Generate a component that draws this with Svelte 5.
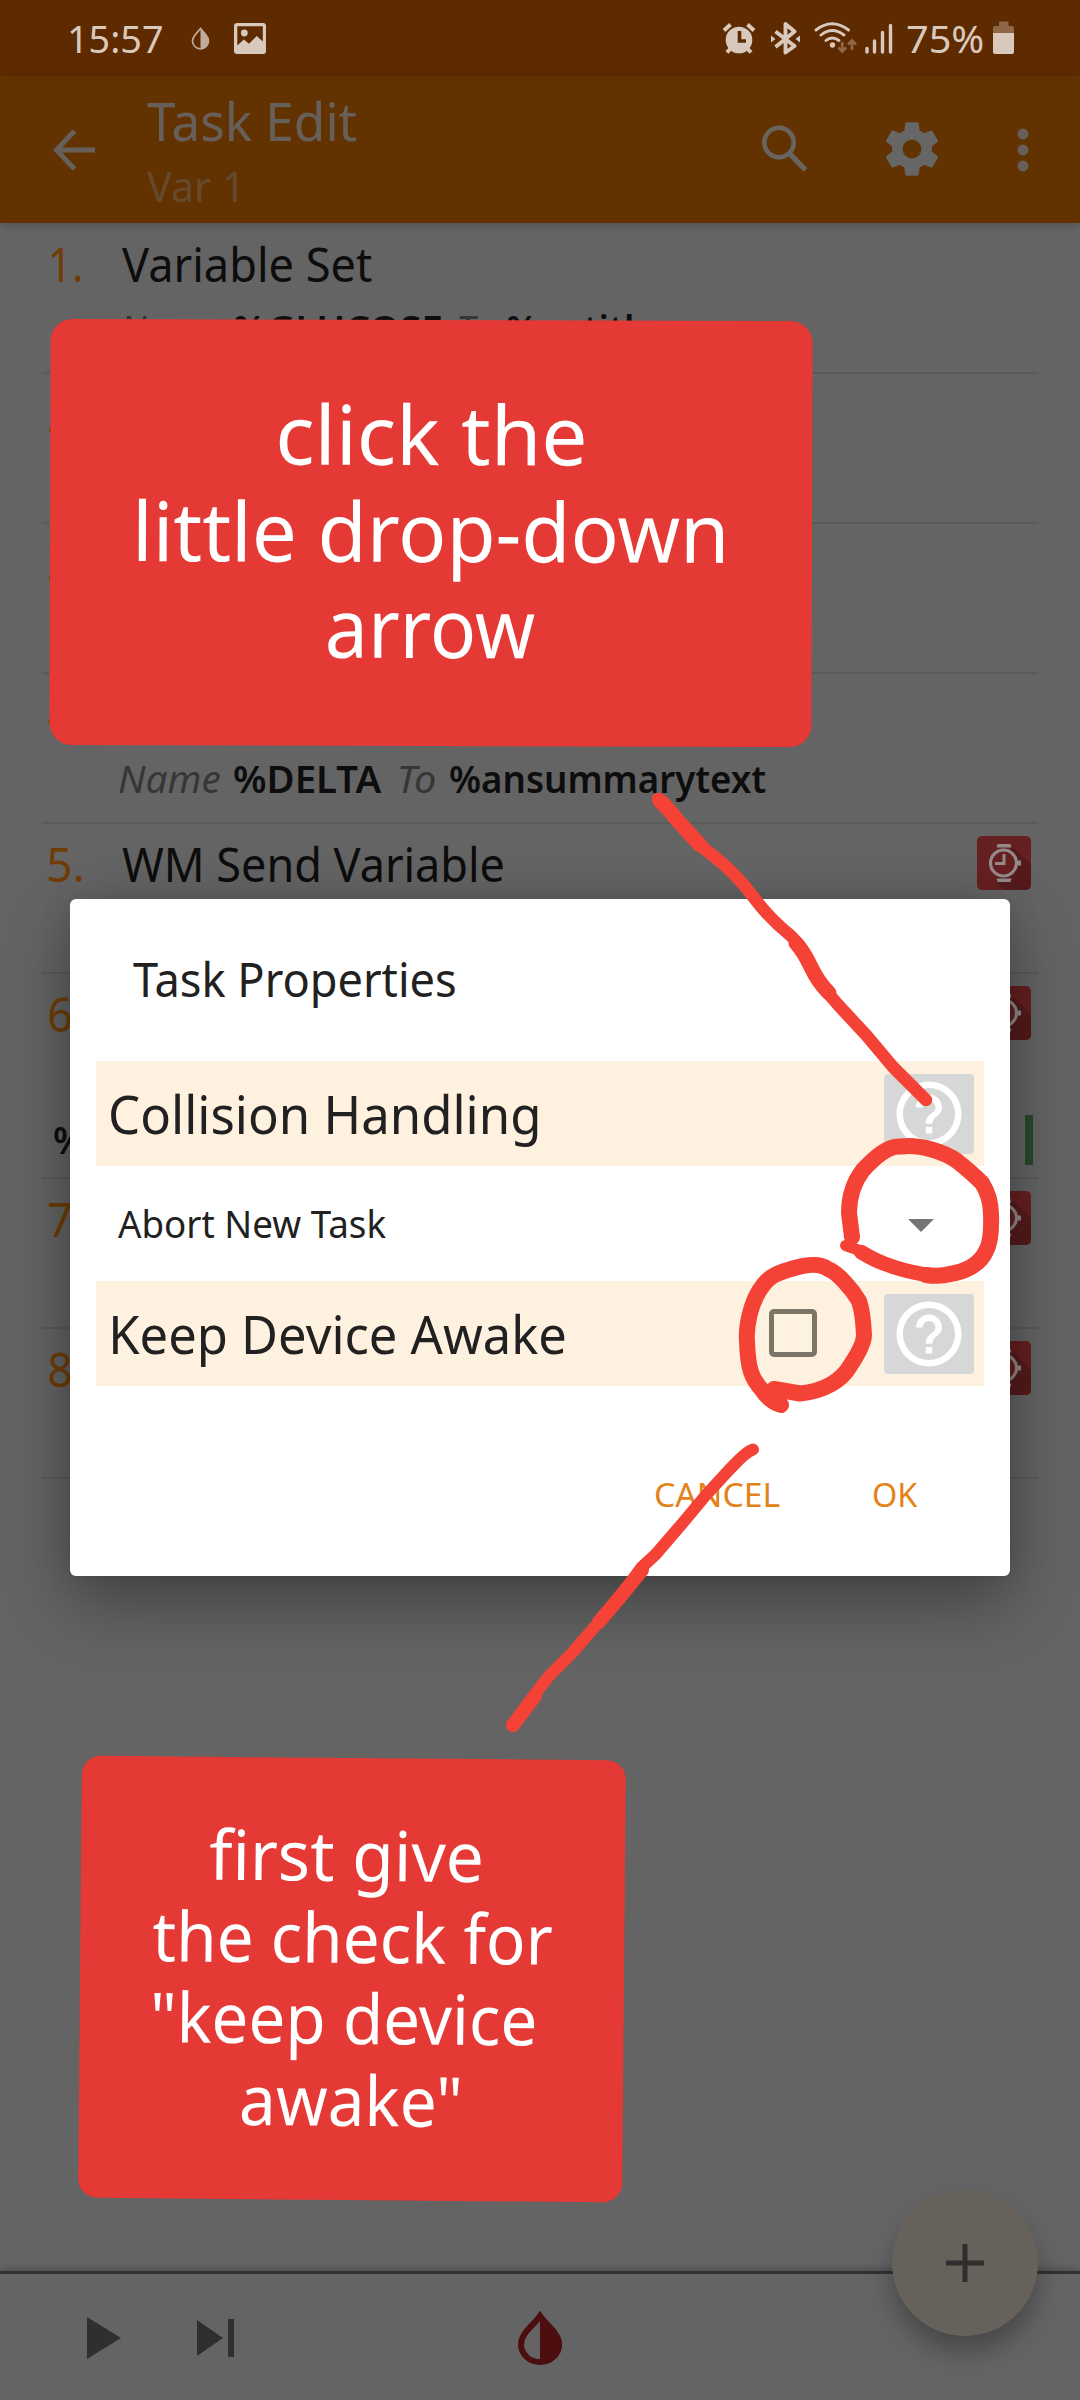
<script>
  // Condenses a line of text horizontally so that its ink spans exactly `width` pixels.
  function fit(node, width) {
    const style = getComputedStyle(node);
    const ctx = document.createElement('canvas').getContext('2d');
    ctx.font = `${style.fontStyle} ${style.fontWeight} ${style.fontSize} ${style.fontFamily}`;
    const m = ctx.measureText(node.textContent);
    const ink = m.actualBoundingBoxLeft + m.actualBoundingBoxRight;
    node.style.width = `${width}px`;
    node.style.transform = `scaleX(${width / ink}) translateX(${m.actualBoundingBoxLeft}px)`;
  }

  const tasks = [
    { n: '1.', w: 30, title: 'Variable Set', tw: 250, args: [['Name', 97, 16], ['%GLUCOSE', 207, 18], ['To', 33, 15], ['%antitle', 148, 0]] },
    { n: '2.', w: 33 },
    { n: '3.', w: 33 },
    { n: '4.', w: 33, args: [['Name', 101, 14], ['%DELTA', 148, 18], ['To', 35, 15], ['%ansummarytext', 316, 0]] },
    { n: '5.', w: 33, title: 'WM Send Variable', tw: 381, watch: true },
    { n: '6.', w: 33, watch: true, label: '%' },
    { n: '7.', w: 33, watch: true },
    { n: '8.', w: 33, watch: true }
  ];
</script>

{#snippet help()}
  <span class="help">
    <svg width="66" height="66" viewBox="0 0 24 24" fill="#fff"><path d="M11 18h2v-2h-2v2zm1-16C6.480 2 2 6.480 2 12s4.480 10 10 10 10-4.480 10-10S17.520 2 12 2zm0 18c-4.410 0-8-3.590-8-8s3.590-8 8-8 8 3.590 8 8-3.590 8-8 8zm0-14c-2.210 0-4 1.790-4 4h2c0-1.100.9-2 2-2s2 .9 2 2c0 2-3 1.750-3 5h2c0-2.250 3-2.500 3-5 0-2.210-1.790-4-4-4z" /></svg>
  </span>
{/snippet}

<div class="screen">
  <div class="status">
    <span class="t clock" use:fit={92}>15:57</span>
    <svg class="drop" width="19" height="23" viewBox="0 0 19 23">
      <path d="M9.500 1.500C7 5 1.500 9 1.500 14a8 7.800 0 0 0 16 0C17.500 9 12 5 9.500 1.500Z" fill="none" stroke="#c2aa9a" stroke-width="1.700" />
      <path d="M9.500 1C12 5 18 9 18 14a8.500 8 0 0 1-8.500 8Z" fill="#c2aa9a" />
    </svg>
    <svg class="photo" width="32" height="31" viewBox="0 0 32 31">
      <path fill="#d9c8bc" fill-rule="evenodd" d="M3 0H29a3 3 0 0 1 3 3V28a3 3 0 0 1-3 3H3a3 3 0 0 1-3-3V3a3 3 0 0 1 3-3ZM3.300 3.200V22.500L9.800 16.500 15 20.800 22.800 13 28.800 18.500V3.200Z" />
      <circle cx="10.300" cy="10" r="3.400" fill="#d9c8bc" />
    </svg>
    <span class="grow"></span>
    <svg width="293" height="34" viewBox="721 21 293 34" fill="#d9c8bc">
      <circle cx="739" cy="40" r="13.300" />
      <path d="M724 30.500 730.500 24.500M754 30.500 747.500 24.500M731 48 727 52.500M747 48 751 52.500" stroke="#d9c8bc" stroke-width="4" fill="none" />
      <path d="M739.500 31V41H746" stroke="#5e2a00" stroke-width="3.600" fill="none" />
      <path d="M775.500 31.500 794.500 46 785.500 52.500V24L794.500 31.500 775.500 47" stroke="#d9c8bc" stroke-width="3.900" fill="none" stroke-linejoin="round" />
      <path d="M771 35.500 775.500 39 771 42.500ZM800 35.500 795.500 39 800 42.500Z" />
      <path d="M816 30Q832 17.500 848.500 30M821 35Q832 26 844 35M826 40.500Q832 35.500 839 40.500" stroke="#d9c8bc" stroke-width="2.900" fill="none" stroke-linecap="round" />
      <circle cx="832.500" cy="45" r="2.700" />
      <path d="M842.300 42V51M838.500 47.500 842.300 51.500 846.200 47.500M852 50V41M848 44.500 852 40.500 856 44.500" stroke="#8f6748" stroke-width="2.700" fill="none" />
      <path d="M867 48.500V52M874.500 41V52M882.500 32.500V52M890.500 25.500V52" stroke="#d9c8bc" stroke-width="3.400" fill="none" stroke-linecap="round" />
      <path d="M999 21.500h9.500v4.500h3.500a2 2 0 0 1 2 2V34H993V28a2 2 0 0 1 2-2h4Z" fill="#8f6748" />
      <path d="M993 33h21v19a2 2 0 0 1-2 2h-17a2 2 0 0 1-2-2Z" />
    </svg>
    <span class="t clock pct" use:fit={76}>75%</span>
  </div>

  <header>
    <svg class="back" width="42" height="42" viewBox="0 0 42 42"><path d="M42 21H4M21.500 2 3.500 21 21.500 40" fill="none" stroke="#67605a" stroke-width="5" /></svg>
    <div class="titles">
      <span class="t title" use:fit={209}>Task Edit</span>
      <span class="t sub" use:fit={90}>Var 1</span>
    </div>
    <svg class="search" width="46" height="47" viewBox="0 0 46 47" fill="none" stroke="#686561"><circle cx="17" cy="17.500" r="14.700" stroke-width="4.600" /><path d="M28 29 43.500 45" stroke-width="5.200" /></svg>
    <svg class="gear" width="64" height="64" viewBox="0 0 24 24" fill="#666"><path d="M19.430 12.980c.04-.32.07-.64.07-.98s-.03-.66-.07-.98l2.110-1.650c.19-.15.240-.42.120-.64l-2-3.460c-.12-.22-.39-.3-.61-.22l-2.490 1c-.52-.4-1.080-.73-1.690-.98l-.38-2.650C14.460 2.180 14.250 2 14 2h-4c-.25 0-.46.180-.49.420l-.38 2.650c-.61.250-1.170.590-1.690.98l-2.490-1c-.23-.09-.49 0-.61.220l-2 3.460c-.13.220-.07.490.120.640l2.110 1.650c-.04.320-.07.650-.07.980s.03.660.07.980l-2.110 1.650c-.19.150-.24.420-.12.640l2 3.460c.12.220.39.300.61.220l2.490-1c.52.400 1.080.730 1.690.980l.38 2.650c.03.240.240.420.490.420h4c.25 0 .46-.18.490-.42l.38-2.650c.61-.25 1.170-.59 1.690-.98l2.490 1c.23.090.490 0 .61-.22l2-3.460c.12-.22.070-.49-.12-.64l-2.110-1.650zM12 15.500c-1.930 0-3.500-1.570-3.500-3.500s1.570-3.500 3.500-3.500 3.500 1.570 3.500 3.500-1.570 3.500-3.500 3.500z" /></svg>
    <svg class="more" width="12" height="44" viewBox="0 0 12 44" fill="#67605a"><circle cx="6" cy="6" r="5.500" /><circle cx="6" cy="22" r="5.500" /><circle cx="6" cy="38" r="5.500" /></svg>
  </header>

  <main>
    {#each tasks as task}
      <div class="task" class:tall={task.label}>
        <div class="line">
          <span class="num"><span class="t" use:fit={task.w}>{task.n}</span></span>
          {#if task.title}<span class="t name" use:fit={task.tw}>{task.title}</span>{/if}
          {#if task.watch}
            <svg class="watch" width="54" height="54" viewBox="0 0 54 54">
              <rect width="54" height="54" rx="5" fill="#672021" />
              <path d="M35 10 54 28V49a5 5 0 0 1-5 5H27L18 44Z" fill="#551b1c" />
              <circle cx="26.500" cy="27" r="13" fill="#672021" stroke="#948a8a" stroke-width="3.200" />
              <path d="M19.500 11.500 20.500 8H33.500L34.500 11.500ZM19.500 42.500 20.500 46H33.500L34.500 42.500ZM40 24.500h4v5h-4Z" fill="#948a8a" />
              <path d="M27 18V27.500H18" fill="none" stroke="#948a8a" stroke-width="3" />
            </svg>
          {/if}
        </div>
        {#if task.args}
          <div class="args">
            {#each task.args as [text, w, gap], i}
              <span class="t" class:key={i % 2 === 0} class:val={i % 2 === 1} style:margin-right="{gap}px" use:fit={w}>{text}</span>
            {/each}
          </div>
        {/if}
        {#if task.label}
          <div class="label"><span class="t val" use:fit={31}>{task.label}</span><i></i></div>
        {/if}
      </div>
    {/each}
  </main>

  <footer>
    <svg width="34" height="42" viewBox="0 0 34 42" fill="#2f2f2f"><path d="M0 0 34 21 0 42Z" /></svg>
    <svg class="next" width="37" height="38" viewBox="0 0 37 38" fill="#2f2f2f"><path d="M0 1 26 19 0 37ZM31 0h6v38h-6Z" /></svg>
    <svg class="blood" width="44" height="54" viewBox="0 0 44 54">
      <path d="M22 5C16 14 3 22 3 33.500a19 17.500 0 0 0 38 0C41 22 28 14 22 5Z" fill="none" stroke="#4c0e0f" stroke-width="6" />
      <path d="M22 1C28 12 44 21 44 33.500a22 20 0 0 1-22 20Z" fill="#4c0e0f" />
    </svg>
  </footer>
  <div class="fab"><svg width="38" height="38" viewBox="0 0 38 38"><path d="M19 0V38M0 19H38" stroke="#2f2e2c" stroke-width="5" /></svg></div>

  <section class="dialog">
    <div class="heading"><span class="t" use:fit={322}>Task Properties</span></div>
    <div class="row tint"><span class="t big" use:fit={427}>Collision Handling</span><span class="grow"></span>{@render help()}</div>
    <div class="row select"><span class="t opt" use:fit={268}>Abort New Task</span><span class="grow"></span><i class="caret"></i></div>
    <div class="row tint"><span class="t big keep" use:fit={452}>Keep Device Awake</span><span class="grow"></span><i class="check"></i>{@render help()}</div>
    <div class="actions"><span class="t" use:fit={124}>CANCEL</span><span class="t" use:fit={44}>OK</span></div>
  </section>

  <div class="note first">
    <span class="t" use:fit={305}>click the</span>
    <span class="t" use:fit={586}>little drop-down</span>
    <span class="t" use:fit={207}>arrow</span>
  </div>
  <div class="note second">
    <span class="t pull" use:fit={271}>first give</span>
    <span class="t" use:fit={399}>the check for</span>
    <span class="t pull" use:fit={381}>"keep device</span>
    <span class="t nudge" use:fit={217}>awake"</span>
  </div>

  <svg class="ink" width="1080" height="2400" viewBox="0 0 1080 2400" fill="none" stroke="#f44336" stroke-linecap="round" stroke-linejoin="round">
    <path stroke-width="12.500" d="M658 799Q667 806 677 820C687 834 699 845 711 854Q735 872 755 899C766 914 780 927 791 936C802 946 804 957 811 968C818 982 830 996 841 1008L867 1036 893 1067 926 1100" />
    <path stroke-width="15" d="M660 801Q668 808 678 821L700 845M796 943Q804 952 811 967T829 993" />
    <path stroke-width="16" d="M852 1237 849 1213Q849 1188 863 1170C874 1158 888 1145 901 1146.500C920 1144 945 1152 957 1161Q972 1173 982 1183Q991 1197 991 1215Q992 1241 986 1251C980 1265 964 1272 950 1274Q940 1277 926 1275" />
    <path stroke-width="14.500" d="M932 1275.500C905 1272 880 1264 861 1252" />
    <path stroke-width="11" d="M880 1261 861 1251 845.500 1245.500" />
    <path stroke-width="16" d="M774 1389 800 1393.500C825 1391 842 1380 850 1366Q864 1345 864 1335Q863 1312 859 1301C852 1289 837 1272 828 1269C819 1262 804 1265 791 1269C782 1272 772 1274 764 1284C749 1302 746 1330 747 1342C748 1368 751 1378 762 1390Q769 1401 781 1405" />
    <path stroke-width="12" d="M753 1449.500C745 1452 736 1463 729 1470L706 1495 681 1525 656 1554 641 1568 620 1597 599 1622 572 1653 549 1676Q532 1697 513 1726" />
    <path stroke-width="14" d="M642 1570 620 1597 599 1622M535 1696 513 1725" />
  </svg>
</div>

<style>
  :global(body) { background: #646464; }
  .screen { position: relative; width: 1080px; height: 2400px; overflow: hidden; display: flex; flex-direction: column; background: #646464; font-family: "Noto Sans", "Open Sans", sans-serif; color: #0d0d0d; }
  .screen svg { display: block; flex: none; }
  .t { display: block; flex: none; white-space: pre; transform-origin: 0 50%; }
  .grow { flex: 1; }

  .status { height: 76px; flex: none; display: flex; align-items: center; padding: 0 66px 0 70px; background: #5e2a00; }
  .clock { font-size: 37.600px; line-height: 50px; color: #d9c8bc; padding-top: 1px; }
  .drop { margin-left: 29px; }
  .photo { margin-left: 24px; }
  .pct { margin-left: -107px; margin-right: 31px; }

  header { height: 147px; flex: none; display: flex; align-items: center; padding: 0 51.500px 0 53px; background: #623200; box-shadow: 0 2px 8px rgba(0, 0, 0, .2); z-index: 1; }
  .titles { flex: 1; align-self: flex-start; display: flex; flex-direction: column; gap: 10px; padding: 15px 0 0 52px; }
  .title { font-size: 53px; line-height: 60px; color: #67605a; }
  .sub { font-size: 41px; line-height: 50px; color: #664a2e; }
  .search { margin-top: -3px; }
  .gear { margin-left: 72px; margin-top: -2px; }
  .more { margin-left: 73px; }

  main { flex: 1; padding: 1px 42px 0; }
  .task { height: 150px; box-sizing: border-box; border-bottom: 2px solid #5a5a5a; padding: 10px 7px 0; }
  .task.tall { height: 205px; }
  .line { display: flex; height: 60px; font-size: 48px; line-height: 60px; }
  .num { width: 73px; color: #6f3c06; }
  .task:first-child .num { padding-left: 2px; width: 71px; }
  .watch { margin: 2px 0 0 auto; }
  .args { display: flex; padding: 13px 0 0 70px; font-size: 37.500px; line-height: 44px; }
  .task:first-child .args { padding-left: 72px; }
  .key { font-style: italic; color: #363636; }
  .val { font-weight: 600; }
  .label { display: flex; justify-content: space-between; padding: 74px 0 0 5px; font-size: 37.500px; line-height: 44px; }
  .label i { width: 8px; height: 50px; margin: -3px -2px 0 0; background: #2b492b; }

  footer { height: 129px; flex: none; box-sizing: border-box; border-top: 3px solid #313131; display: flex; align-items: center; padding: 2px 0 0 87px; box-shadow: 0 -1px 8px rgba(0, 0, 0, .3); background: #646464; }
  .next { margin-left: 75.500px; }
  .blood { margin-left: 284px; }
  .fab { position: absolute; left: 892px; top: 2190px; width: 146px; height: 146px; border-radius: 50%; background: #66615a; display: grid; place-items: center; box-shadow: 0 16px 24px rgba(0, 0, 0, .28); }

  .dialog { position: absolute; left: 70px; top: 899px; width: 940px; height: 677px; box-sizing: border-box; padding: 50px 26px 0; border-radius: 6px; background: #fff; color: #212121; display: flex; flex-direction: column; box-shadow: 0 28px 70px rgba(0, 0, 0, .33), 0 0 30px rgba(0, 0, 0, .12); }
  .heading { padding-left: 37px; margin-bottom: 52px; font-size: 47.500px; line-height: 60px; }
  .row { display: flex; align-items: center; height: 105px; }
  .row.select { height: 115px; padding: 0 50px 0 22px; }
  .tint { background: #fff1df; padding: 0 10px 0 15px; }
  .big { font-size: 53px; line-height: 64px; }
  .keep { margin-left: 1.500px; }
  .opt { font-size: 37.500px; line-height: 50px; }
  .caret { border: 13px solid transparent; border-top-color: #757575; border-bottom: 0; margin-top: 3px; }
  .check { width: 38px; height: 38px; border: 5px solid #7d7468; border-radius: 5px; margin: -1px 67px 0 0; }
  .help { width: 90px; height: 80px; border-radius: 4px; background: #d6d8d7; display: grid; place-items: center; }
  .help svg { width: 78px; height: 78px; }
  .actions { display: flex; justify-content: flex-end; gap: 94px; padding: 89px 66px 0 0; font-size: 33px; line-height: 40px; color: #e38218; }

  .note { position: absolute; box-sizing: border-box; display: flex; flex-direction: column; align-items: center; background: #e53935; color: #fff; }
  .first { left: 49.500px; top: 320px; width: 762px; height: 426px; padding-top: 65px; border-radius: 22px; font-size: 82px; line-height: 96.500px; transform: rotate(.17deg); }
  .second { left: 80px; top: 1757.500px; width: 544px; height: 442px; padding-top: 56px; border-radius: 19px; font-size: 69px; line-height: 81.600px; transform: rotate(.5deg); }
  .pull { margin-right: 16px; }
  .nudge { margin-right: 2px; }
  .ink { position: absolute; left: 0; top: 0; }
</style>
